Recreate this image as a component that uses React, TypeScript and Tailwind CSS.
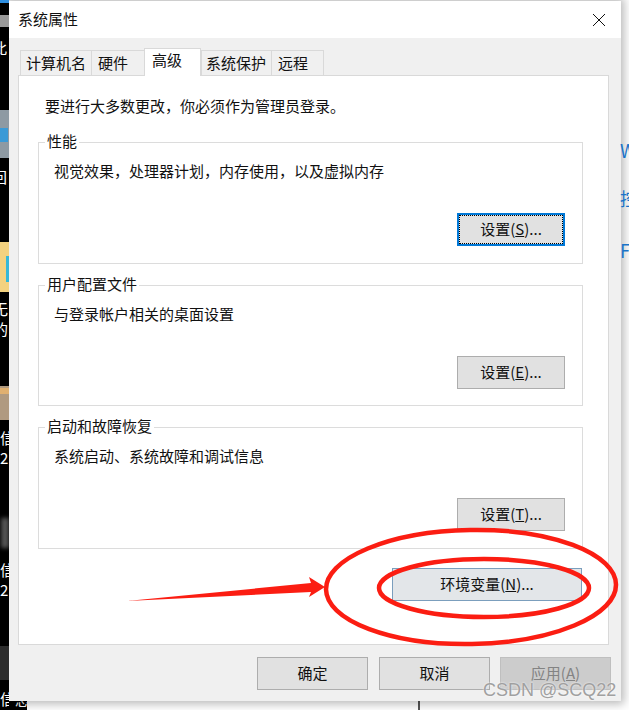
const font = "font-['Noto_Sans_CJK_SC','Microsoft_YaHei',sans-serif]";

// 左侧露出的桌面图标
function DesktopStrip() {
  return (
    <div className="relative w-[9px] h-full shrink-0 bg-black overflow-hidden text-white text-[15px] leading-[20px]">
      <div className="absolute left-0 top-0 w-[9px] h-[3px] bg-[#2f8fe0]" />
      <div className="absolute left-0 top-[15px] w-[9px] h-[12px] bg-[#9a9a9a]" />
      <span className="absolute left-[-8px] top-[38px]">此</span>
      <div className="absolute left-0 top-[110px] w-[9px] h-[48px] bg-[#8e9aa3]" />
      <div className="absolute left-0 top-[128px] w-[8px] h-[14px] bg-[#3b9ad6]" />
      <span className="absolute left-[-8px] top-[167px]">回</span>
      <div className="absolute left-0 top-[242px] w-[9px] h-[50px] bg-[#f3d27f]" />
      <div className="absolute left-[6px] top-[256px] w-[3px] h-[26px] bg-[#35b8d8]" />
      <span className="absolute left-[-7px] top-[299px]">无</span>
      <span className="absolute left-[-7px] top-[319px]">的</span>
      <div className="absolute left-0 top-[386px] w-[9px] h-[34px] bg-[#b09a80]" />
      <div className="absolute left-0 top-[388px] w-[9px] h-[6px] bg-[#e0b070]" />
      <span className="absolute left-0 top-[428px]">信</span>
      <span className="absolute left-0 top-[448px]">2</span>
      <div className="absolute left-[1px] top-[518px] w-[8px] h-[30px] bg-[#555555] blur-[2px]" />
      <span className="absolute left-0 top-[560px]">信</span>
      <span className="absolute left-0 top-[580px]">2</span>
      <div className="absolute left-0 top-[646px] w-[9px] h-[34px] bg-[#2c2c2c]" />
      <span className="absolute left-0 top-[689px]">信</span>
    </div>
  );
}

function Tab({ label, className, active }: { label: string; className: string; active?: boolean }) {
  if (active) {
    return (
      <div className={`${className} h-[28px] -mb-[1px] z-10 bg-white border border-b-0 border-[#d9d9d9] text-[15px] leading-[22px] text-[#111]`}>
        {label}
      </div>
    );
  }
  return (
    <div className={`${className} h-[25px] border border-b-0 border-r-0 last:border-r border-[#d9d9d9] bg-[#f0f0f0] text-[15px] leading-[24px] text-[#111]`}>
      {label}
    </div>
  );
}

function WinButton({ children, className }: { children: React.ReactNode; className: string }) {
  return (
    <div className={`flex items-center justify-center border text-[15px] text-[#111] ${className}`}>
      <span>{children}</span>
    </div>
  );
}

function Group({ title, text, height, children }: { title: string; text: string; height: string; children: React.ReactNode }) {
  return (
    <div className={`relative ${height} border border-[#dcdcdc] pl-[15px] pr-[17px] pt-[18px]`}>
      <div className="absolute left-[6px] top-[-12px] bg-white px-[2px] text-[15px] leading-[20px] text-[#111]">{title}</div>
      <div className="text-[15px] leading-[20px] text-[#111]">{text}</div>
      <div className="absolute right-[17px] bottom-[17px]">{children}</div>
    </div>
  );
}

export default function App() {
  return (
    <div className={`relative w-[629px] h-[710px] overflow-hidden bg-white flex ${font}`}>
      <DesktopStrip />

      <div className="flex-1 relative overflow-hidden">
        {/* 窗口下方、右侧露出的背景 */}
        <div className="absolute left-0 top-[700px] w-[18px] h-[10px] bg-black overflow-hidden">
          <span className="absolute left-[6px] top-[-11px] text-[15px] leading-[20px] text-white">息</span>
        </div>
        <div className="absolute left-[409px] top-[700px] w-[2px] h-[10px] bg-[#555]" />

        <div className="relative z-10 w-[612px] h-[700px] mt-[1px] bg-[#f0f0f0] shadow-[0_0_9px_3px_rgba(0,0,0,0.28)] flex flex-col">
          <div className="h-[37px] bg-white flex items-center justify-between pl-[9px] pr-[15px] shrink-0">
            <span className="text-[15px] text-[#111]">系统属性</span>
            <svg width="14" height="14" viewBox="0 0 14 14" fill="none" stroke="#111" strokeWidth="1">
              <path d="M1 1 L13 13 M13 1 L1 13" />
            </svg>
          </div>

          <div className="flex flex-col pl-[9px] pr-[12px]">
            <div className="flex items-end h-[37px] pl-[2px]">
              <Tab label="计算机名" className="w-[71px] pl-[5px]" />
              <Tab label="硬件" className="w-[53px] pl-[6px]" />
              <Tab label="高级" className="w-[57px] pl-[7px]" active />
              <Tab label="系统保护" className="w-[70px] pl-[4px]" />
              <Tab label="远程" className="w-[53px] pl-[6px]" />
            </div>

            <div className="h-[570px] bg-white border border-[#d9d9d9] pl-[19px] pr-[25px] flex flex-col">
              <div className="pl-[7px] pt-[20px] h-[66px] text-[15px] leading-[20px] text-[#111]">
                要进行大多数更改，你必须作为管理员登录。
              </div>
              <div className="flex flex-col gap-[21px]">
                <Group title="性能" height="h-[122px]" text="视觉效果，处理器计划，内存使用，以及虚拟内存">
                  <WinButton className="w-[108px] h-[33px] border-2 border-[#0078d7] bg-[#e1e1e1] outline-1 outline-dotted outline-offset-[-3px] outline-black">
                    设置(<span className="underline">S</span>)...
                  </WinButton>
                </Group>
                <Group title="用户配置文件" height="h-[121px]" text="与登录帐户相关的桌面设置">
                  <WinButton className="w-[108px] h-[33px] -mb-[1px] border-[#adadad] bg-[#e1e1e1]">
                    设置(<span className="underline">E</span>)...
                  </WinButton>
                </Group>
                <Group title="启动和故障恢复" height="h-[122px]" text="系统启动、系统故障和调试信息">
                  <WinButton className="w-[108px] h-[33px] border-[#adadad] bg-[#e1e1e1]">
                    设置(<span className="underline">T</span>)...
                  </WinButton>
                </Group>
              </div>
              <div className="flex justify-end mt-[19px] mr-[1px]">
                <WinButton className="w-[190px] h-[33px] border-[#7b9ebd] bg-[#e3e6e9]">
                  环境变量(<span className="underline">N</span>)...
                </WinButton>
              </div>
            </div>

            <div className="flex justify-end gap-[10px] mt-[12px] -mr-[2px]">
              <WinButton className="w-[111px] h-[33px] mr-[1px] border-[#adadad] bg-[#e1e1e1]">确定</WinButton>
              <WinButton className="w-[111px] h-[33px] border-[#adadad] bg-[#e1e1e1]">取消</WinButton>
              <div className="w-[111px] h-[33px] border border-[#bfbfbf] bg-[#cccccc] flex items-center justify-center text-[15px] text-[#838383]">
                <span>应用(<span className="underline">A</span>)</span>
              </div>
            </div>
          </div>
        </div>

        <div className="absolute z-20 left-[611px] top-[138px] w-[10px] overflow-hidden text-[18px] leading-[24px] text-[#1a73c8] flex flex-col">
          <span>W</span>
          <span className="mt-[24px]">控</span>
          <span className="mt-[28px]">F</span>
        </div>
      </div>

      {/* 截图上的红色标注 */}
      <svg className="absolute z-30 left-0 top-0 pointer-events-none" width="629" height="710" viewBox="0 0 629 710" fill="none">
        <ellipse cx="471" cy="587" rx="145" ry="57" stroke="#fb1d12" strokeWidth="4.5" transform="rotate(-1 471 587)" />
        <ellipse cx="484" cy="588" rx="105" ry="29" stroke="#fb1d12" strokeWidth="4.5" />
        <path d="M127 601 L311 583 L309 577 L325 587 L309 597 L311 592 Z" fill="#fb1d12" />
      </svg>

      <div className="absolute z-30 left-[483px] top-[678px] text-[18px] leading-[24px] text-[#a0a0a0] font-['Liberation_Sans',sans-serif] [text-shadow:0_0_2px_#ffffff]">
        CSDN @SCQ22
      </div>
    </div>
  );
}
